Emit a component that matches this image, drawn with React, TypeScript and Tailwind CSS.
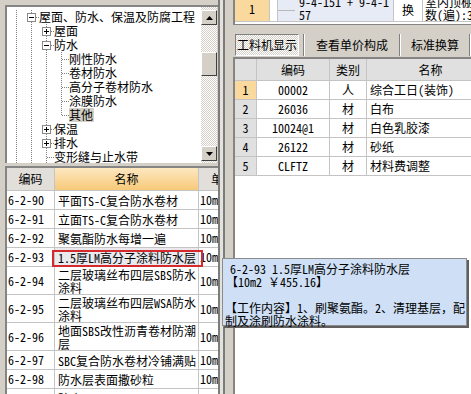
import React from "react";

type Kind = "v" | "tee" | "end" | "plus" | "minus";

const FONT = "font-['Noto_Sans_Mono_CJK_SC','Noto_Sans_CJK_SC',sans-serif]";

const treeRows: { cells: Kind[]; text: string; sel?: boolean }[] = [
  { cells: ["v", "minus"], text: "屋面、防水、保温及防腐工程" },
  { cells: ["v", "v", "plus"], text: "屋面" },
  { cells: ["v", "v", "minus"], text: "防水" },
  { cells: ["v", "v", "v", "tee"], text: "刚性防水" },
  { cells: ["v", "v", "v", "tee"], text: "卷材防水" },
  { cells: ["v", "v", "v", "tee"], text: "高分子卷材防水" },
  { cells: ["v", "v", "v", "tee"], text: "涂膜防水" },
  { cells: ["v", "v", "v", "end"], text: "其他", sel: true },
  { cells: ["v", "v", "plus"], text: "保温" },
  { cells: ["v", "v", "plus"], text: "排水" },
  { cells: ["v", "v", "tee"], text: "变形缝与止水带" },
];

const deRows: { code: string; name: string[]; hl?: boolean }[] = [
  { code: "6-2-90", name: ["平面TS-C复合防水卷材"] },
  { code: "6-2-91", name: ["立面TS-C复合防水卷材"] },
  { code: "6-2-92", name: ["聚氨酯防水每增一遍"] },
  { code: "6-2-93", name: ["1.5厚LM高分子涂料防水层"], hl: true },
  { code: "6-2-94", name: ["二层玻璃丝布四层SBS防水", "涂料"] },
  { code: "6-2-95", name: ["二层玻璃丝布四层WSA防水", "涂料"] },
  { code: "6-2-96", name: ["地面SBS改性沥青卷材防潮", "层"] },
  { code: "6-2-97", name: ["SBC复合防水卷材冷铺满贴"] },
  { code: "6-2-98", name: ["防水层表面撒砂粒"] },
  { code: "6-2-99", name: ["防水层"] },
];

const gljRows = [
  ["1", "00002", "人", "综合工日(装饰)"],
  ["2", "26036", "材", "白布"],
  ["3", "10024@1", "材", "白色乳胶漆"],
  ["4", "26122", "材", "砂纸"],
  ["5", "CLFTZ", "材", "材料费调整"],
];

function TreeCell({ kind }: { kind: Kind }) {
  const dot = { stroke: "#7f7f7f", strokeWidth: 1, strokeDasharray: "1 1" };
  const box = kind === "plus" || kind === "minus";
  return (
    <svg width="15" height="14" className="shrink-0">
      {(kind === "v" || kind === "tee") && <line x1="7.5" y1="0" x2="7.5" y2="14" {...dot} />}
      {kind === "end" && <line x1="7.5" y1="0" x2="7.5" y2="8" {...dot} />}
      {(kind === "tee" || kind === "end") && <line x1="8" y1="7.5" x2="15" y2="7.5" {...dot} />}
      {box && (
        <>
          <line x1="7.5" y1="0" x2="7.5" y2="4" {...dot} />
          <line x1="7.5" y1="12" x2="7.5" y2="14" {...dot} />
          <line x1="12" y1="7.5" x2="15" y2="7.5" {...dot} />
          <rect x="3.5" y="3.5" width="8" height="8" fill="#fff" stroke="#8a8a8a" />
          <line x1="5" y1="7.5" x2="10" y2="7.5" stroke="#000" />
          {kind === "plus" && <line x1="7.5" y1="5" x2="7.5" y2="10" stroke="#000" />}
        </>
      )}
    </svg>
  );
}

function ScrollBtn({ up }: { up?: boolean }) {
  return (
    <div className="flex h-[15px] items-center justify-center border border-t-white border-l-white border-r-[#404040] border-b-[#404040] bg-[#d4d0c8]">
      <svg width="7" height="4">
        <polygon points={up ? "3.5,0 7,4 0,4" : "0,0 7,0 3.5,4"} fill="#000" />
      </svg>
    </div>
  );
}

export default function App() {
  return (
    <div className={`relative flex h-[394px] w-[471px] overflow-hidden bg-[#d4d0c8] text-[12px] leading-[14px] text-black ${FONT}`}>
      {/* left side: tree + quota list */}
      <div className="flex w-[218px] shrink-0 flex-col pl-[5px] pt-[5px]">
        <div className="flex h-[158px] shrink-0 overflow-hidden border-l-2 border-t-2 border-[#858585] bg-white">
          <div className="flex flex-1 flex-col overflow-hidden pl-[2px] pt-[3px]">
            {treeRows.map((r, i) => (
              <div key={i} className="flex h-[14px] shrink-0 items-center whitespace-nowrap">
                {r.cells.map((c, j) => (
                  <TreeCell key={j} kind={c} />
                ))}
                <span className={r.sel ? "bg-[#d4d0c8] pr-[1px]" : ""}>{r.text}</span>
              </div>
            ))}
          </div>
          <div className="flex w-[16px] shrink-0 flex-col bg-[image:repeating-conic-gradient(#ffffff_0_25%,#d4d0c8_0_50%)] bg-[length:2px_2px] pt-[3px] pb-[2px]">
            <ScrollBtn up />
            <div className="mt-[27px] h-[24px] border border-t-white border-l-white border-r-[#404040] border-b-[#404040] bg-[#d4d0c8]" />
            <div className="flex-1" />
            <ScrollBtn />
          </div>
          <div className="w-[1px] shrink-0 bg-[#d4d0c8]" />
        </div>

        <div className="mt-[3px] flex flex-1 flex-col overflow-hidden border-l-2 border-t-2 border-[#858585] bg-white">
          <div className="flex h-[23px] shrink-0 border-b border-[#c4c4c4] whitespace-nowrap">
            <div className="flex w-[48px] shrink-0 items-center justify-center border-r border-[#c4c4c4] bg-[#e2dfda]">编码</div>
            <div className="flex w-[144px] shrink-0 items-center justify-center border-r border-[#c4c4c4] bg-linear-to-b from-[#fde8c0] to-[#f7c978]">名称</div>
            <div className="flex flex-1 items-center overflow-hidden bg-[#e2dfda] pl-[12px]">单位</div>
          </div>
          {deRows.map((r) => (
            <div
              key={r.code}
              className={`flex shrink-0 border-b border-[#c4c4c4] whitespace-nowrap ${r.name.length > 1 ? "h-[28px]" : "h-[19px]"}`}
            >
              <div className="flex w-[48px] shrink-0 items-center border-r border-[#c4c4c4] pl-[1px]">{r.code}</div>
              <div className={`relative flex w-[144px] shrink-0 flex-col justify-center border-r border-[#c4c4c4] pl-[3px] leading-[13px] ${r.hl ? "bg-[#e9e9ee]" : ""}`}>
                {r.name.map((n) => (
                  <div key={n}>{n}</div>
                ))}
                {r.hl && <div className="absolute top-[2px] -bottom-[1px] -left-[3px] -right-[5px] z-10 border-2 border-[#d42a2e]" />}
              </div>
              <div className="flex flex-1 items-center overflow-hidden pl-[1px]">10m2</div>
            </div>
          ))}
        </div>
      </div>

      {/* splitter */}
      <div className="flex w-[15px] shrink-0">
        <div className="w-[2px] bg-[#7c7c7c]" />
        <div className="w-[3px] bg-[#e4e2dd]" />
        <div className="w-[2px] bg-[#7c7c7c]" />
        <div className="flex-1" />
      </div>

      {/* right side */}
      <div className="flex flex-1 flex-col overflow-hidden">
        <div className="h-[25px] shrink-0 border-b border-l-2 border-[#858585] bg-white">
          <div className="flex h-[22px] overflow-hidden border-b border-[#c4c4c4] whitespace-nowrap">
            <div className="flex w-[35px] shrink-0 items-center justify-center border-r border-[#c4c4c4] bg-[#fad99e] pb-[4px]">1</div>
            <div className="w-[8px] shrink-0 border-r border-[#c4c4c4]" />
            <div className="flex w-[116px] shrink-0 border-r border-[#c4c4c4] bg-[#e7ebf6]">
              <div className="mt-[10px] h-[1px] w-[17px] shrink-0 bg-[#b8b8b8]" />
              <div className="-mt-[5px] pl-[4px] leading-[13px]">
                <div>9-4-151 + 9-4-1</div>
                <div>57</div>
              </div>
            </div>
            <div className="flex w-[29px] shrink-0 items-center justify-center border-r border-[#c4c4c4] pb-[2px]">换</div>
            <div className="-mt-[5px] pl-[2px] leading-[13px]">
              <div>室内顶棚</div>
              <div>数(遍):3</div>
            </div>
          </div>
        </div>

        <div className="mt-[9px] flex h-[22px] shrink-0 items-stretch pl-[2px] whitespace-nowrap">
          <div className="flex w-[70px] items-center justify-center border border-t-[#808080] border-l-[#808080] border-r-white border-b-white bg-[image:repeating-conic-gradient(#ffffff_0_25%,#d4d0c8_0_50%)] bg-[length:2px_2px]">
            工料机显示
          </div>
          <div className="ml-[4px] w-[2px] border-l border-r border-l-[#808080] border-r-white" />
          <div className="flex items-center px-[11px]">查看单价构成</div>
          <div className="w-[2px] border-l border-r border-l-[#808080] border-r-white" />
          <div className="flex items-center px-[10px]">标准换算</div>
          <div className="w-[2px] border-l border-r border-l-[#808080] border-r-white" />
        </div>

        <div className="mt-[1px] flex-1 overflow-hidden border-l-2 border-t-2 border-[#858585] bg-white">
          <div className="grid w-[260px] grid-cols-[22px_73px_37px_128px] whitespace-nowrap">
            <div className="h-[22px] border-r border-b border-[#c4c4c4] bg-[#e0e0e0]" />
            <div className="flex h-[22px] items-center justify-center border-r border-b border-[#c4c4c4] bg-[#e0e0e0]">编码</div>
            <div className="flex h-[22px] items-center justify-center border-r border-b border-[#c4c4c4] bg-[#e0e0e0]">类别</div>
            <div className="flex h-[22px] items-center justify-center border-r border-b border-[#c4c4c4] bg-[#e0e0e0]">名称</div>
            {gljRows.map((r) => (
              <React.Fragment key={r[0]}>
                <div className={`flex h-[19px] items-center justify-center border-r border-b border-[#c4c4c4] ${r[0] === "1" ? "bg-[#fad99e]" : "bg-[#e0e0e0]"}`}>{r[0]}</div>
                <div className="flex h-[19px] items-center justify-center border-r border-b border-[#c4c4c4]">{r[1]}</div>
                <div className="flex h-[19px] items-center justify-center border-r border-b border-[#c4c4c4]">{r[2]}</div>
                <div className="flex h-[19px] items-center border-r border-b border-[#c4c4c4] pl-[3px]">{r[3]}</div>
              </React.Fragment>
            ))}
          </div>
        </div>
      </div>

      {/* hover tooltip */}
      <div className="absolute left-[222px] top-[258px] z-20 h-[68px] w-[245px] border border-[#8c8c8c] bg-[#cfe0f6] pl-[2px] pt-[3px] leading-[13px] whitespace-nowrap shadow-[2px_2px_0_#5f5f5f]">
        <div className="pl-[5px]">6-2-93 1.5厚LM高分子涂料防水层</div>
        <div className="pl-[1px]">【10m2 ￥455.16】</div>
        <div>&nbsp;</div>
        <div>【工作内容】1、刷聚氨酯。2、清理基层，配</div>
        <div>制及涂刷防水涂料。</div>
      </div>
    </div>
  );
}
